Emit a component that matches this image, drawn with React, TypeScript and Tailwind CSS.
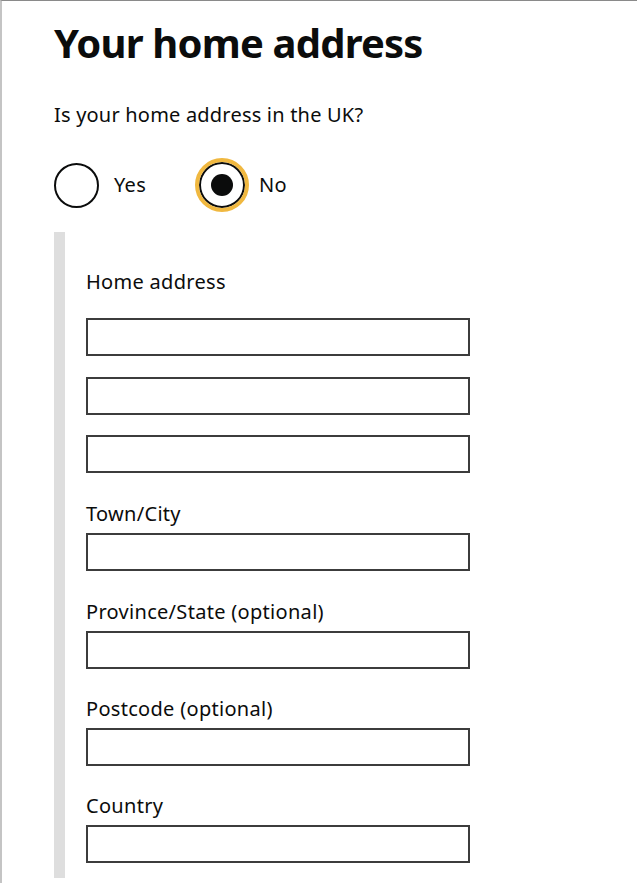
export default function App() {
  const fields = [
    { label: "Town/City", top: "mt-[29px]" },
    { label: "Province/State (optional)", top: "mt-[28.5px]" },
    { label: "Postcode (optional)", top: "mt-[28.5px]" },
    { label: "Country", top: "mt-[28px]" },
  ];

  return (
    <div className="min-h-[883px] bg-white border-t border-t-[#8a8a8a] border-l-2 border-l-[#c4c4c4] font-['Noto_Sans',Arial,sans-serif] text-[#0b0c0c]">
      <div className="pl-[52px] pt-[18px]">
        <h1 className="text-[40px] leading-[48px] font-bold tracking-[-0.8px]">Your home address</h1>
        <p className="mt-[36px] text-[20px] leading-[24px] tracking-[0.2px]">Is your home address in the UK?</p>

        <div className="mt-[35px] flex items-center h-[46px] text-[20px] tracking-[0.3px]">
          <div className="flex items-center">
            <span className="w-[45px] h-[45px] rounded-full border-2 border-[#0b0c0c] bg-white" />
            <span className="ml-[15px]">Yes</span>
          </div>
          <div className="flex items-center ml-[53px]">
            <span className="w-[46px] h-[46px] rounded-full border-2 border-[#0b0c0c] bg-white flex items-center justify-center outline-[4px] outline-[#f0b840]">
              <span className="w-[22px] h-[22px] rounded-full bg-[#0b0c0c]" />
            </span>
            <span className="ml-[14px]">No</span>
          </div>
        </div>

        <div className="mt-[24px] border-l-[11px] border-l-[#dedede] pl-[21px] pt-[38px] pb-[15px] text-[20px] leading-[24px] tracking-[0.3px]">
          <label className="block">Home address</label>
          <div className="mt-[24px] flex flex-col gap-[20.5px]">
            <input className="block w-[384px] h-[38px] border-2 border-[#3c3c3c] bg-white" />
            <input className="block w-[384px] h-[38px] border-2 border-[#3c3c3c] bg-white" />
            <input className="block w-[384px] h-[38px] border-2 border-[#3c3c3c] bg-white" />
          </div>
          {fields.map((f) => (
            <div key={f.label} className={f.top}>
              <label className="block">{f.label}</label>
              <input className="mt-[7px] block w-[384px] h-[38px] border-2 border-[#3c3c3c] bg-white" />
            </div>
          ))}
        </div>
      </div>
    </div>
  );
}
